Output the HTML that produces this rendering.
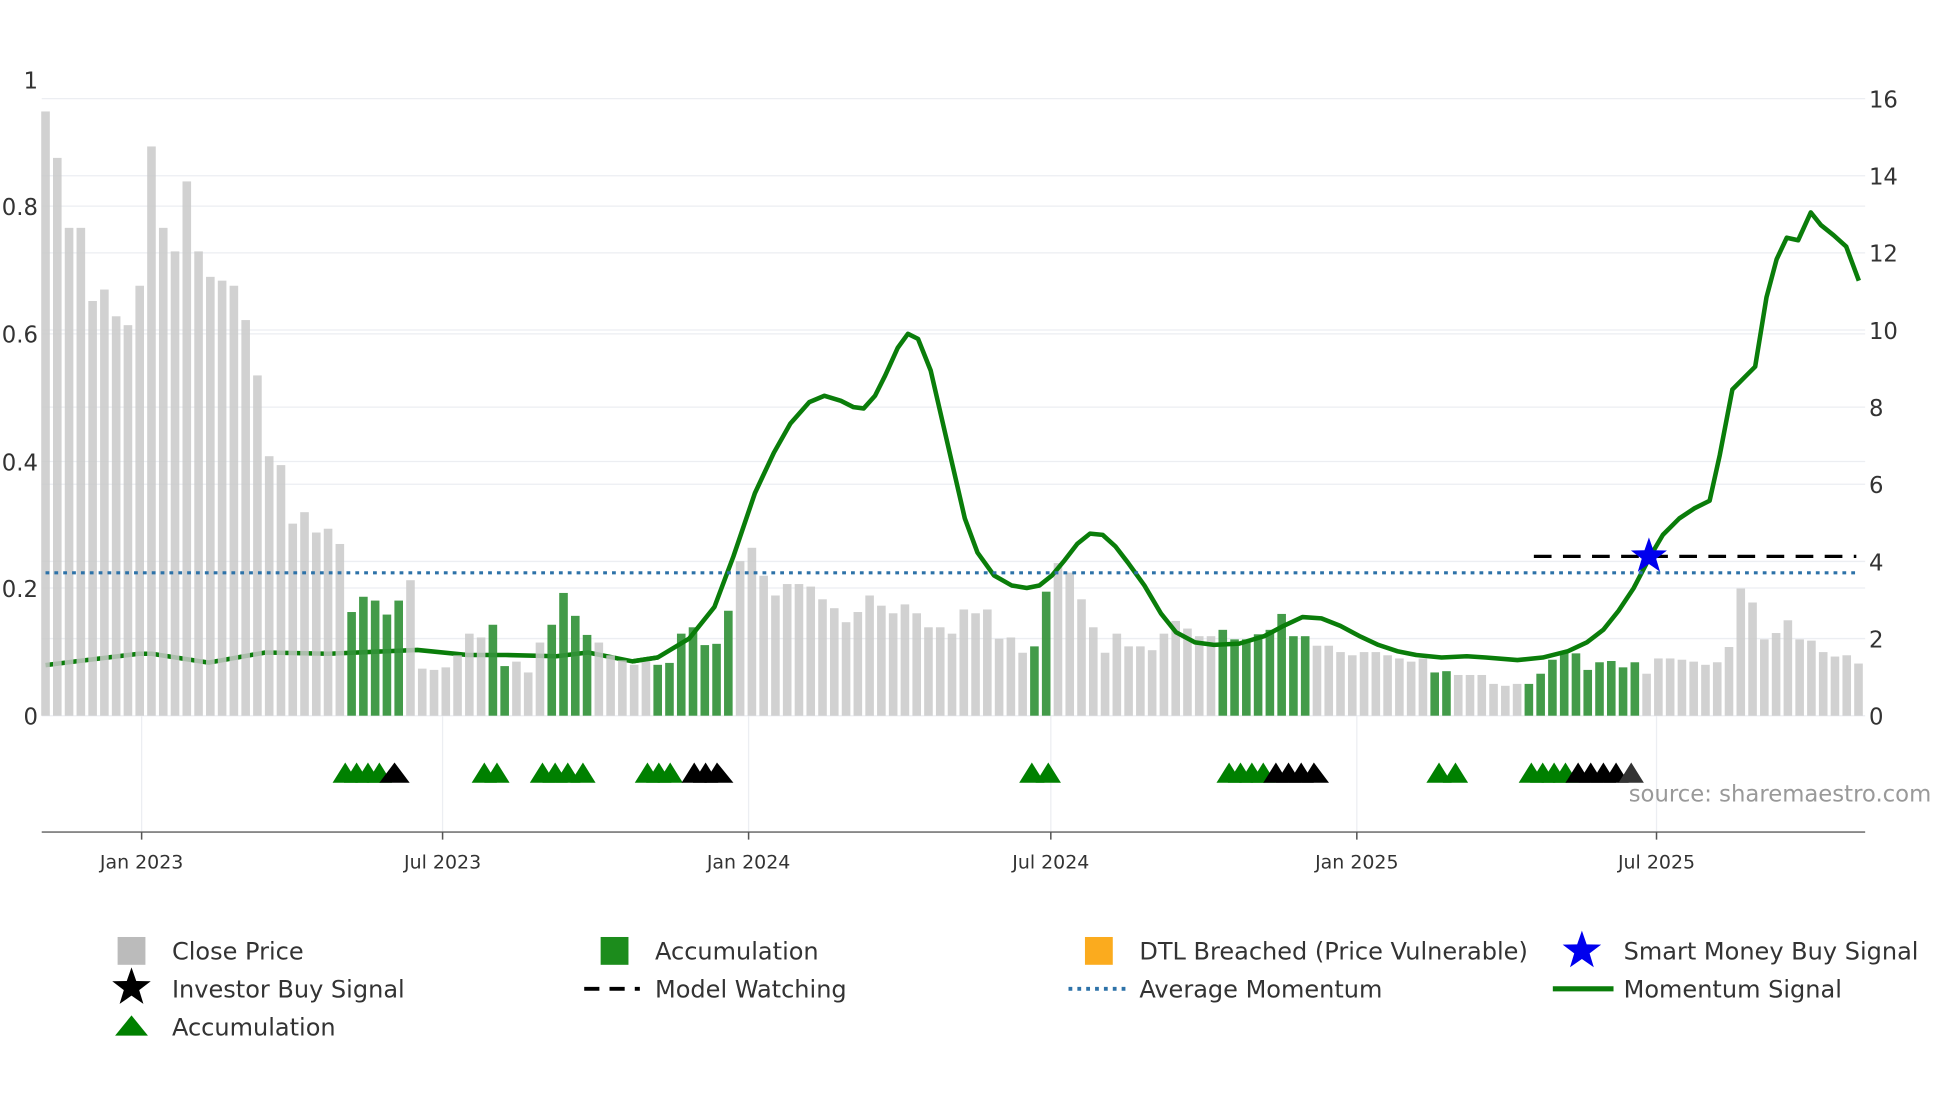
<!DOCTYPE html>
<html><head><meta charset="utf-8"><style>
html,body{margin:0;padding:0;background:#fff;}
svg{display:block;}
text{font-family:"DejaVu Sans","Liberation Sans",sans-serif;fill:#333;}
</style></head><body>
<svg width="1960" height="1102" viewBox="0 0 1550 871.5" preserveAspectRatio="none" xmlns="http://www.w3.org/2000/svg">
<rect width="1550" height="872" fill="#fff"/>
<!-- grid -->
<g stroke="#eceef2" stroke-width="1">
<line x1="33" x2="1475" y1="78" y2="78"/><line x1="33" x2="1475" y1="139" y2="139"/>
<line x1="33" x2="1475" y1="163" y2="163"/><line x1="33" x2="1475" y1="200" y2="200"/>
<line x1="33" x2="1475" y1="261" y2="261"/><line x1="33" x2="1475" y1="264" y2="264"/>
<line x1="33" x2="1475" y1="322" y2="322"/><line x1="33" x2="1475" y1="365" y2="365"/>
<line x1="33" x2="1475" y1="383" y2="383"/><line x1="33" x2="1475" y1="444" y2="444"/>
<line x1="33" x2="1475" y1="465" y2="465"/><line x1="33" x2="1475" y1="505" y2="505"/>
<line x1="33" x2="1475" y1="566" y2="566"/>
<line x1="112" x2="112" y1="566" y2="658"/><line x1="350" x2="350" y1="566" y2="658"/>
<line x1="592" x2="592" y1="566" y2="658"/><line x1="831" x2="831" y1="566" y2="658"/>
<line x1="1073" x2="1073" y1="566" y2="658"/><line x1="1310" x2="1310" y1="566" y2="658"/>
</g>
<!-- axis labels -->
<g font-size="18">
<text x="30" y="70" text-anchor="end">1</text>
<text x="30" y="170" text-anchor="end">0.8</text>
<text x="30" y="271" text-anchor="end">0.6</text>
<text x="30" y="372" text-anchor="end">0.4</text>
<text x="30" y="472" text-anchor="end">0.2</text>
<text x="30" y="573" text-anchor="end">0</text>
<text x="1478" y="85">16</text><text x="1478" y="146">14</text><text x="1478" y="207">12</text>
<text x="1478" y="268">10</text><text x="1478" y="329">8</text><text x="1478" y="390">6</text>
<text x="1478" y="451">4</text><text x="1478" y="512">2</text><text x="1478" y="573">0</text>
</g>
<!-- momentum line (behind bars for left part) -->
<polyline fill="none" stroke="#0a7d0a" stroke-width="3.6" stroke-linejoin="round" points="36,526 60,523 110,517 120,517 165,524 210,516 260,517 330,514 370,518 400,518 440,519 465,516 500,523 520,520"/>
<!-- bars -->
<g transform="translate(32.6,566) scale(9.31,-503)">
<g fill="#c9c9c9" fill-opacity="0.85">
<rect x="0" width=".73" height=".95"/><rect x="1" width=".73" height=".877"/><rect x="2" width=".73" height=".767"/><rect x="3" width=".73" height=".767"/><rect x="4" width=".73" height=".652"/><rect x="5" width=".73" height=".67"/><rect x="6" width=".73" height=".628"/><rect x="7" width=".73" height=".614"/><rect x="8" width=".73" height=".676"/><rect x="9" width=".73" height=".895"/><rect x="10" width=".73" height=".767"/><rect x="11" width=".73" height=".73"/><rect x="12" width=".73" height=".84"/><rect x="13" width=".73" height=".73"/><rect x="14" width=".73" height=".69"/><rect x="15" width=".73" height=".684"/><rect x="16" width=".73" height=".676"/><rect x="17" width=".73" height=".622"/><rect x="18" width=".73" height=".535"/><rect x="19" width=".73" height=".408"/><rect x="20" width=".73" height=".394"/><rect x="21" width=".73" height=".302"/><rect x="22" width=".73" height=".32"/><rect x="23" width=".73" height=".288"/><rect x="24" width=".73" height=".294"/><rect x="25" width=".73" height=".27"/>
<rect x="31" width=".73" height=".213"/><rect x="32" width=".73" height=".074"/><rect x="33" width=".73" height=".072"/><rect x="34" width=".73" height=".076"/><rect x="35" width=".73" height=".095"/><rect x="36" width=".73" height=".129"/><rect x="37" width=".73" height=".123"/>
<rect x="40" width=".73" height=".085"/><rect x="41" width=".73" height=".068"/><rect x="42" width=".73" height=".115"/>
<rect x="47" width=".73" height=".115"/><rect x="48" width=".73" height=".095"/><rect x="49" width=".73" height=".087"/><rect x="50" width=".73" height=".08"/><rect x="51" width=".73" height=".087"/>
<rect x="59" width=".73" height=".243"/><rect x="60" width=".73" height=".264"/><rect x="61" width=".73" height=".22"/><rect x="62" width=".73" height=".189"/><rect x="63" width=".73" height=".207"/><rect x="64" width=".73" height=".207"/><rect x="65" width=".73" height=".203"/><rect x="66" width=".73" height=".183"/><rect x="67" width=".73" height=".169"/><rect x="68" width=".73" height=".147"/><rect x="69" width=".73" height=".163"/><rect x="70" width=".73" height=".189"/><rect x="71" width=".73" height=".173"/><rect x="72" width=".73" height=".161"/><rect x="73" width=".73" height=".175"/><rect x="74" width=".73" height=".161"/><rect x="75" width=".73" height=".139"/><rect x="76" width=".73" height=".139"/><rect x="77" width=".73" height=".129"/><rect x="78" width=".73" height=".167"/><rect x="79" width=".73" height=".161"/><rect x="80" width=".73" height=".167"/><rect x="81" width=".73" height=".121"/><rect x="82" width=".73" height=".123"/><rect x="83" width=".73" height=".099"/>
<rect x="86" width=".73" height=".24"/><rect x="87" width=".73" height=".225"/><rect x="88" width=".73" height=".183"/><rect x="89" width=".73" height=".139"/><rect x="90" width=".73" height=".099"/><rect x="91" width=".73" height=".129"/><rect x="92" width=".73" height=".109"/><rect x="93" width=".73" height=".109"/><rect x="94" width=".73" height=".103"/><rect x="95" width=".73" height=".129"/><rect x="96" width=".73" height=".149"/><rect x="97" width=".73" height=".137"/><rect x="98" width=".73" height=".125"/><rect x="99" width=".73" height=".125"/>
<rect x="108" width=".73" height=".11"/><rect x="109" width=".73" height=".11"/><rect x="110" width=".73" height=".10"/><rect x="111" width=".73" height=".095"/><rect x="112" width=".73" height=".1"/><rect x="113" width=".73" height=".1"/><rect x="114" width=".73" height=".095"/><rect x="115" width=".73" height=".09"/><rect x="116" width=".73" height=".085"/><rect x="117" width=".73" height=".09"/>
<rect x="120" width=".73" height=".064"/><rect x="121" width=".73" height=".064"/><rect x="122" width=".73" height=".064"/><rect x="123" width=".73" height=".05"/><rect x="124" width=".73" height=".047"/><rect x="125" width=".73" height=".05"/>
<rect x="136" width=".73" height=".066"/><rect x="137" width=".73" height=".09"/><rect x="138" width=".73" height=".09"/><rect x="139" width=".73" height=".088"/><rect x="140" width=".73" height=".085"/><rect x="141" width=".73" height=".08"/><rect x="142" width=".73" height=".084"/><rect x="143" width=".73" height=".108"/><rect x="144" width=".73" height=".2"/><rect x="145" width=".73" height=".178"/><rect x="146" width=".73" height=".12"/><rect x="147" width=".73" height=".13"/><rect x="148" width=".73" height=".15"/><rect x="149" width=".73" height=".12"/><rect x="150" width=".73" height=".118"/><rect x="151" width=".73" height=".10"/><rect x="152" width=".73" height=".093"/><rect x="153" width=".73" height=".095"/><rect x="154" width=".73" height=".082"/>
</g>
<g fill="#33933a" fill-opacity="0.92">
<rect x="26" width=".73" height=".163"/><rect x="27" width=".73" height=".187"/><rect x="28" width=".73" height=".181"/><rect x="29" width=".73" height=".159"/><rect x="30" width=".73" height=".181"/>
<rect x="38" width=".73" height=".143"/><rect x="39" width=".73" height=".078"/>
<rect x="43" width=".73" height=".143"/><rect x="44" width=".73" height=".193"/><rect x="45" width=".73" height=".157"/><rect x="46" width=".73" height=".127"/>
<rect x="52" width=".73" height=".08"/><rect x="53" width=".73" height=".083"/><rect x="54" width=".73" height=".129"/><rect x="55" width=".73" height=".139"/><rect x="56" width=".73" height=".111"/><rect x="57" width=".73" height=".113"/><rect x="58" width=".73" height=".165"/>
<rect x="84" width=".73" height=".109"/><rect x="85" width=".73" height=".195"/>
<rect x="100" width=".73" height=".135"/><rect x="101" width=".73" height=".12"/><rect x="102" width=".73" height=".12"/><rect x="103" width=".73" height=".128"/><rect x="104" width=".73" height=".135"/><rect x="105" width=".73" height=".16"/><rect x="106" width=".73" height=".125"/><rect x="107" width=".73" height=".125"/>
<rect x="118" width=".73" height=".068"/><rect x="119" width=".73" height=".07"/>
<rect x="126" width=".73" height=".05"/><rect x="127" width=".73" height=".066"/><rect x="128" width=".73" height=".088"/><rect x="129" width=".73" height=".098"/><rect x="130" width=".73" height=".098"/><rect x="131" width=".73" height=".072"/><rect x="132" width=".73" height=".084"/><rect x="133" width=".73" height=".086"/><rect x="134" width=".73" height=".076"/><rect x="135" width=".73" height=".084"/>
</g>
</g>
<!-- momentum line on top -->
<polyline fill="none" stroke="#0a7d0a" stroke-width="3.6" stroke-linejoin="round" points="500,523 520,520 545,505 565,480 580,440 597,390 612,358 625,335 640,318 652,313 665,317 675,322 683,323 692,313 700,297 710,275 718,264 726,268 736,293 748,345 763,410 773,437 786,455 800,463 812,465 822,463 832,455 842,443 852,430 862,422 872,423 882,432 892,445 905,463 918,485 930,500 945,508 960,510 980,509 1000,503 1015,495 1030,488 1045,489 1060,495 1075,503 1090,510 1105,515 1120,518 1140,520 1160,519 1175,520 1200,522 1220,520 1240,515 1255,508 1268,498 1280,483 1292,465 1305,440 1315,423 1328,410 1340,402 1352,396 1360,360 1370,308 1380,298 1388,290 1397,235 1405,205 1413,188 1422,190 1432,168 1440,178 1450,186 1460,195 1470,222"/>
<!-- average momentum -->
<line x1="36" x2="1470" y1="453" y2="453" stroke="#2d72a8" stroke-width="2.5" stroke-dasharray="3,4"/>
<!-- model watching -->
<line x1="1213" x2="1468" y1="440" y2="440" stroke="#000" stroke-width="2.5" stroke-dasharray="14,9"/>
<!-- star -->
<g transform="translate(1304,440) scale(15)"><polygon fill="#0000ee" points="0,-1 .235,-.324 .951,-.309 .380,.124 .588,.809 0,.4 -.588,.809 -.380,.124 -.951,-.309 -.235,-.324"/></g>
<!-- triangles -->
<g fill="#008000">
<polygon points="263,619 273,603 283,619"/><polygon points="272,619 282,603 292,619"/><polygon points="281,619 291,603 301,619"/><polygon points="290,619 300,603 310,619"/>
<polygon points="373,619 383,603 393,619"/><polygon points="383,619 393,603 403,619"/>
<polygon points="419,619 429,603 439,619"/><polygon points="429,619 439,603 449,619"/><polygon points="439,619 449,603 459,619"/><polygon points="451,619 461,603 471,619"/>
<polygon points="502,619 512,603 522,619"/><polygon points="511,619 521,603 531,619"/><polygon points="520,619 530,603 540,619"/>
<polygon points="806,619 816,603 826,619"/><polygon points="819,619 829,603 839,619"/>
<polygon points="962,619 972,603 982,619"/><polygon points="971,619 981,603 991,619"/><polygon points="980,619 990,603 1000,619"/><polygon points="989,619 999,603 1009,619"/>
<polygon points="1128,619 1138,603 1148,619"/><polygon points="1141,619 1151,603 1161,619"/>
<polygon points="1201,619 1211,603 1221,619"/><polygon points="1210,619 1220,603 1230,619"/><polygon points="1219,619 1229,603 1239,619"/><polygon points="1228,619 1238,603 1248,619"/>
</g>
<g fill="#000">
<polygon points="300,619 312,603 324,619"/>
<polygon points="539,619 549,603 559,619"/><polygon points="548,619 558,603 568,619"/><polygon points="557,619 567,603 580,619"/>
<polygon points="999,619 1009,603 1019,619"/><polygon points="1009,619 1019,603 1029,619"/><polygon points="1019,619 1029,603 1039,619"/><polygon points="1029,619 1039,603 1051,619"/>
<polygon points="1238,619 1248,603 1258,619"/><polygon points="1248,619 1258,603 1268,619"/><polygon points="1258,619 1268,603 1278,619"/><polygon points="1268,619 1278,603 1288,619"/>
</g>
<polygon points="1280,619 1290,603 1300,619 1307,619" fill="#333"/>
<text x="1288" y="634" font-size="18" style="fill:#999">source: sharemaestro.com</text>
<!-- x axis -->
<line x1="33" x2="1475" y1="658" y2="658" stroke="#888" stroke-width="1.5"/>
<g stroke="#555" stroke-width="1.2">
<line x1="112" x2="112" y1="658" y2="664"/><line x1="350" x2="350" y1="658" y2="664"/><line x1="592" x2="592" y1="658" y2="664"/>
<line x1="831" x2="831" y1="658" y2="664"/><line x1="1073" x2="1073" y1="658" y2="664"/><line x1="1310" x2="1310" y1="658" y2="664"/>
</g>
<g font-size="15" text-anchor="middle">
<text x="112" y="687">Jan 2023</text><text x="350" y="687">Jul 2023</text><text x="592" y="687">Jan 2024</text>
<text x="831" y="687">Jul 2024</text><text x="1073" y="687">Jan 2025</text><text x="1310" y="687">Jul 2025</text>
</g>
<!-- legend -->
<g font-size="19">
<rect x="93" y="741" width="22" height="22" fill="#bbb"/><text x="136" y="759">Close Price</text>
<g transform="translate(104,781) scale(16)"><polygon fill="#000" points="0,-1 .235,-.324 .951,-.309 .380,.124 .588,.809 0,.4 -.588,.809 -.380,.124 -.951,-.309 -.235,-.324"/></g><text x="136" y="789">Investor Buy Signal</text>
<polygon points="91,819 104,803 117,819" fill="#008000"/><text x="136" y="819">Accumulation</text>
<rect x="475" y="741" width="22" height="22" fill="#1c8c1c"/><text x="518" y="759">Accumulation</text>
<line x1="462" x2="506" y1="782" y2="782" stroke="#000" stroke-width="3" stroke-dasharray="12,8"/><text x="518" y="789">Model Watching</text>
<rect x="858" y="741" width="22" height="22" fill="#fbab1e"/><text x="901" y="759">DTL Breached (Price Vulnerable)</text>
<line x1="845" x2="890" y1="782" y2="782" stroke="#2d72a8" stroke-width="3" stroke-dasharray="3,4"/><text x="901" y="789">Average Momentum</text>
<g transform="translate(1251,752) scale(16)"><polygon fill="#0000ee" points="0,-1 .235,-.324 .951,-.309 .380,.124 .588,.809 0,.4 -.588,.809 -.380,.124 -.951,-.309 -.235,-.324"/></g><text x="1284" y="759">Smart Money Buy Signal</text>
<line x1="1228" x2="1276" y1="782" y2="782" stroke="#0a7d0a" stroke-width="4"/><text x="1284" y="789">Momentum Signal</text>
</g>
</svg>
</body></html>
